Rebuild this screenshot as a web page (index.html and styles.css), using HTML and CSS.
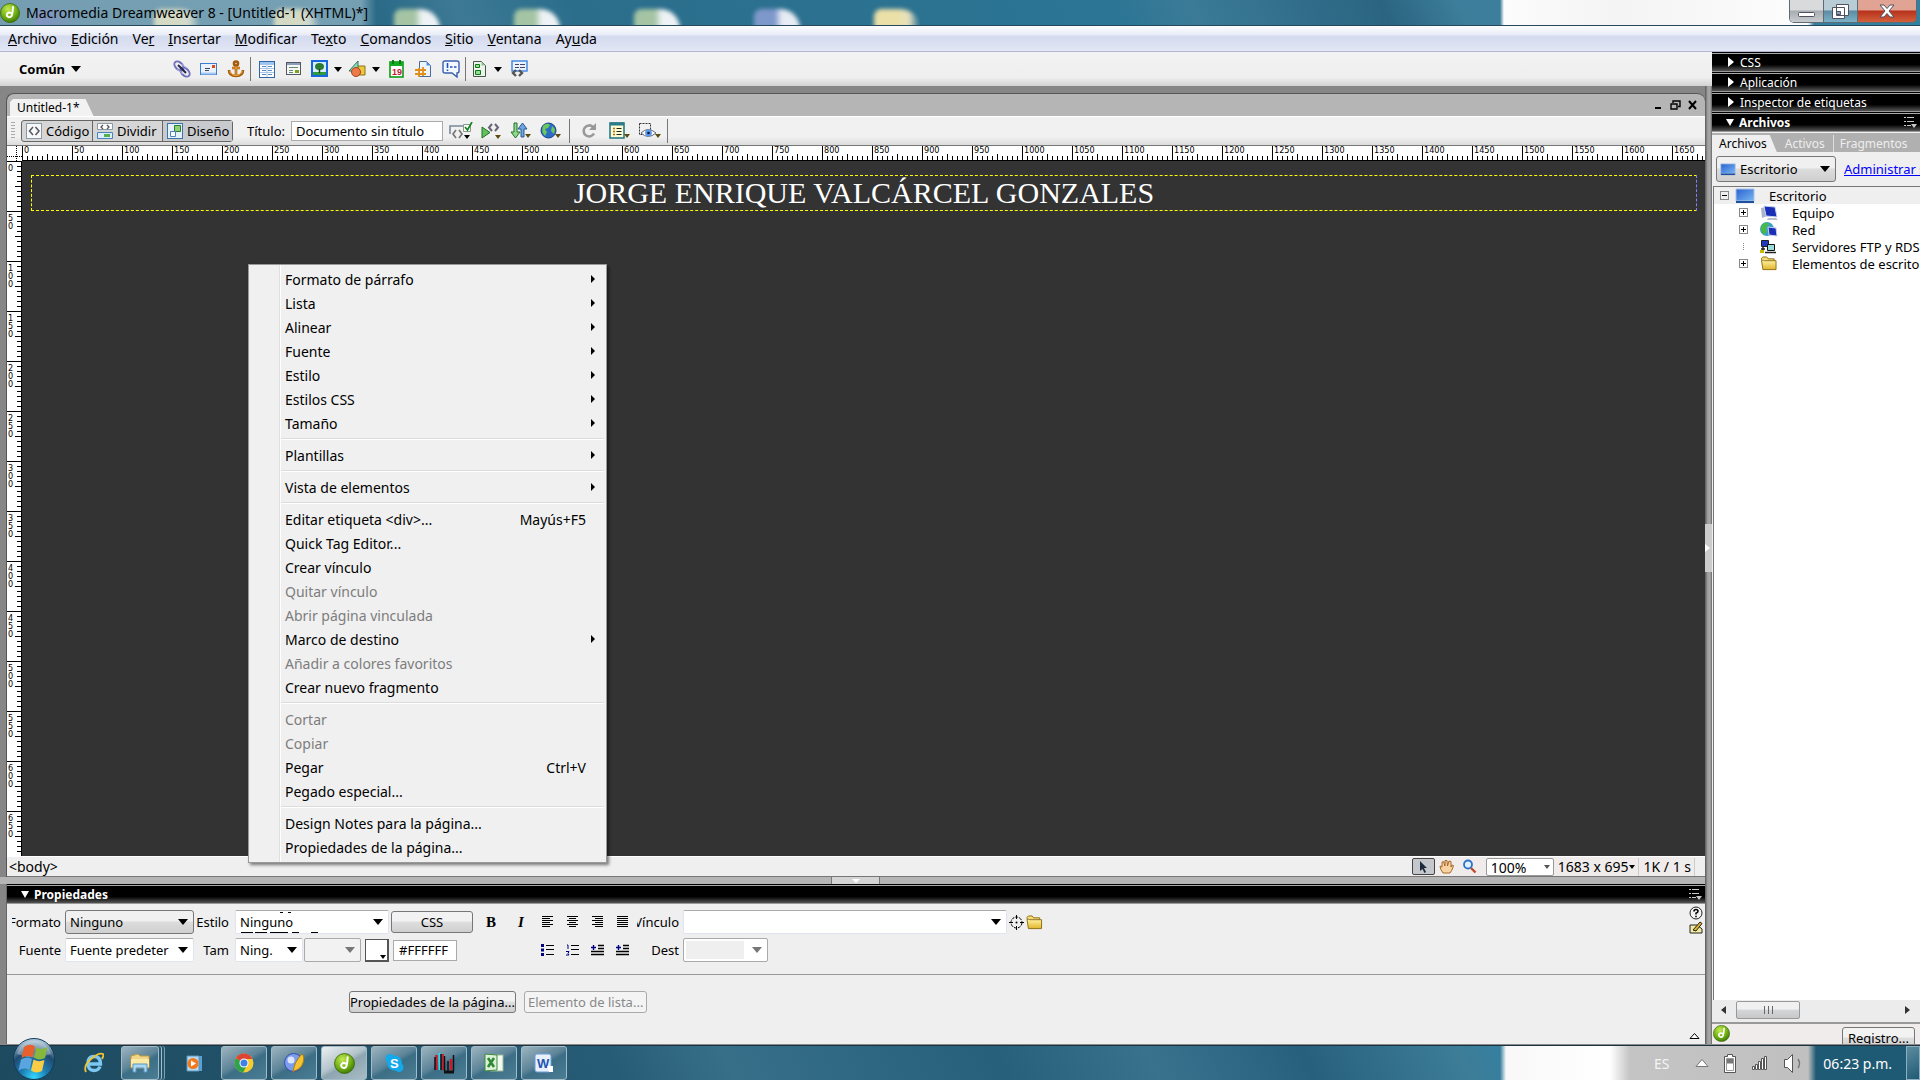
FILE: index.html
```html
<!DOCTYPE html>
<html lang="es">
<head>
  <meta charset="UTF-8">
  <meta name="viewport" content="width=device-width, initial-scale=1.0">
  <title>Macromedia Dreamweaver 8 - [Untitled-1 (XHTML)*]</title>
  <link rel="stylesheet" href="styles.css">
</head>
<body>
  <!-- Shared icon shapes -->
  <svg class="defs" width="0" height="0" aria-hidden="true">
    <defs>
      <radialGradient id="green" cx="40%" cy="30%" r="75%">
        <stop offset="0" stop-color="#c3ea4f"/><stop offset="0.6" stop-color="#6fae14"/><stop offset="1" stop-color="#3c7207"/>
      </radialGradient>
      <radialGradient id="orb" cx="50%" cy="95%" r="90%">
        <stop offset="0" stop-color="#35d8ff"/><stop offset="0.35" stop-color="#1d7fb4"/><stop offset="0.7" stop-color="#1f4a70"/><stop offset="1" stop-color="#a9c4d6"/>
      </radialGradient>
      <linearGradient id="blue" x1="0" y1="0" x2="1" y2="1">
        <stop offset="0" stop-color="#2a62d0"/><stop offset="1" stop-color="#7ab6f2"/>
      </linearGradient>
      <linearGradient id="gold" x1="0" y1="0" x2="0" y2="1">
        <stop offset="0" stop-color="#fff3a0"/><stop offset="1" stop-color="#e2b52c"/>
      </linearGradient>
      <symbol id="dw" viewBox="0 0 20 20">
        <circle cx="10" cy="10" r="9.5" fill="url(#green)" stroke="#386a08" stroke-width="0.8"/>
        <path d="M13 4C12.600 9 12.500 11.500 11.500 13.200a2.600 2.300 0 1 1-.6-3.200" fill="none" stroke="#fff" stroke-width="1.900" stroke-linecap="round"/>
      </symbol>
      <symbol id="folder" viewBox="0 0 18 16">
        <path d="M1 4V2.500L2.500 1h4L8 3h6.500v2" fill="#f6dc75" stroke="#8c6c10"/>
        <path d="M2.500 14.500L1 4.500h2L4 5h12.500v9.500z" fill="url(#gold)" stroke="#8c6c10"/>
      </symbol>
      <symbol id="monitor" viewBox="0 0 20 16">
        <path d="M1 1h18v12H1z" fill="url(#blue)" stroke="#a7c4e6"/>
        <path d="M1 13h18v2H1z" fill="#1c4f9c"/>
      </symbol>
      <symbol id="panelmenu" viewBox="0 0 14 12">
        <path d="M1 1.500h2M1 5.500h2M1 9.500h2M4 1.500h7M4 5.500h7M4 9.500h4" stroke="#c8c8c8"/>
        <path d="M8 8h6l-3 4z" fill="#c8c8c8"/>
      </symbol>
    </defs>
  </svg>

  <header class="titlebar">
    <div class="desktop-icons" aria-hidden="true">
      <i class="blob violet"></i><i class="blob sand"></i><i class="blob sand"></i>
      <i class="blob sheet"></i><i class="blob sheet"></i><i class="blob sheet"></i>
      <i class="blob doc"></i><i class="blob sand"></i>
    </div>
    <h1><svg width="20" height="20"><use href="#dw"/></svg><span>Macromedia Dreamweaver 8 - [Untitled-1 (XHTML)*]</span></h1>
    <div class="win-controls">
      <button class="min" aria-label="Minimizar"><svg width="18" height="6"><rect x="0.500" y="0.500" width="16" height="4" rx="1" fill="#fff" stroke="#50505e"/></svg></button>
      <button class="max" aria-label="Restaurar"><svg width="19" height="17"><path d="M5.500 1.500h12v11h-12z M1.500 4.500h12v11h-12z" fill="#fff" stroke="#50505e"/><path d="M5.500 8.500h4v3h-4z" fill="#8aa6b4" stroke="#50505e"/></svg></button>
      <button class="close" aria-label="Cerrar"><svg width="16" height="14"><path d="M1 1h4l3 3.500L11 1h4l-5 6 5 6h-4L8 9.500 5 13H1l5-6z" fill="#fff" stroke="#50505e"/></svg></button>
    </div>
  </header>

  <nav class="menubar">
    <button><u>A</u>rchivo</button>
    <button><u>E</u>dición</button>
    <button>Ve<u>r</u></button>
    <button><u>I</u>nsertar</button>
    <button><u>M</u>odificar</button>
    <button>Te<u>x</u>to</button>
    <button><u>C</u>omandos</button>
    <button><u>S</u>itio</button>
    <button><u>V</u>entana</button>
    <button>Ay<u>u</u>da</button>
  </nav>

  <div class="workspace">
    <div class="left">
      <div class="insertbar">
        <button class="category">Común <i class="caret"></i></button>
        <button aria-label="Hipervínculo"><svg width="18" height="18"><g fill="none" stroke="#7272bd" stroke-width="2"><ellipse cx="6" cy="6" rx="5.500" ry="3.500" transform="rotate(45 6 6)"/><ellipse cx="12" cy="12" rx="5.500" ry="3.500" transform="rotate(45 12 12)"/></g><path d="M5 5l8 8" stroke="#23234e" stroke-width="2"/><path d="M8 4l6 4M4 9l6 5" stroke="#b4b4e4"/></svg></button>
        <button aria-label="Correo"><svg width="17" height="14"><rect x="0.500" y="1.500" width="16" height="11" fill="#e8f1fc" stroke="#3b7dd0"/><path d="M1 11.500h15" stroke="#a8c8f0" stroke-width="2"/><path d="M5 6.500h5M5 8.500h4" stroke="#445"/><path d="M12 3h3v3h-3z" fill="#e04a18"/></svg></button>
        <button aria-label="Anclaje"><svg width="18" height="18"><g fill="none" stroke="#a35a0b" stroke-width="2.600"><circle cx="9" cy="3.500" r="2"/><path d="M9 5v11M5 8h8M2 10c0 4 3 6 7 6s7-2 7-6"/></g><g fill="none" stroke="#f2a83a"><path d="M9 6v10M5 8h8M2.500 11c1 3 3 4.500 6.500 4.500s5.500-1.500 6.500-4.500"/></g></svg></button>
        <i class="sep"></i>
        <button aria-label="Tabla"><svg width="16" height="17"><rect x="0.500" y="0.500" width="15" height="16" fill="#fff" stroke="#2f66a8"/><path d="M1 2h14" stroke="#9cc4f0" stroke-width="2"/><path d="M3 5.500h4M9 5.500h4M3 9.500h4M9 9.500h4M3 13.500h4M9 13.500h4" stroke="#5b8cc4"/><path d="M1 3.500h14M1 7.500h14M1 11.500h14M8 3v13" stroke="#a9c6e8"/></svg></button>
        <button aria-label="Div"><svg width="16" height="14"><rect x="0.500" y="0.500" width="14" height="12" fill="#f5f7f5" stroke="#556"/><path d="M1 2h13" stroke="#8aa0b8" stroke-width="2"/><path d="M3 5.500h9M3 8.500h4M3 10.500h4" stroke="#687"/><path d="M9 8h4v3H9z" fill="#7fa022"/></svg></button>
        <button class="wide" aria-label="Imagen"><svg width="17" height="18"><rect x="1" y="1" width="15" height="15" fill="#d8eeff" stroke="#1666e2" stroke-width="2"/><path d="M2 12h13v3H2z" fill="#2e9a3a"/><ellipse cx="8.500" cy="6.500" rx="4.500" ry="3.500" fill="#2a7c30"/><path d="M8.500 9v4" stroke="#241" stroke-width="1.500"/></svg><i class="caret small"></i></button>
        <button class="wide" aria-label="Media"><svg width="18" height="18"><path d="M8 6h9v9H8z" fill="#ecc83c" stroke="#8c7414"/><path d="M1 11L10 1v10z" fill="#8fdcb8" stroke="#277a5a"/><circle cx="8" cy="12" r="4.500" fill="#ee7a4a" stroke="#a8401c"/></svg><i class="caret small"></i></button>
        <button aria-label="Fecha"><svg width="16" height="18"><rect x="1" y="2" width="13" height="15" fill="#fff" stroke="#0c9a16" stroke-width="1.600"/><path d="M1 2h13v4H1z" fill="#12ac20"/><path d="M4 0v4M11 0v4" stroke="#0b7c14" stroke-width="2"/><text x="3" y="15" class="cal">19</text></svg></button>
        <button aria-label="Server-side include"><svg width="17" height="18"><path d="M4.500 1.500h7l4 4v11h-11z" fill="#eef4fc" stroke="#4c6a9c"/><path d="M11.500 1.500v4h4z" fill="#4a94e8"/><path d="M4 8v9M8 7v9M0 10h11M0 14h11" stroke="#e0901a" stroke-width="1.800"/></svg></button>
        <button aria-label="Comentario"><svg width="18" height="18"><path d="M3 1h12q2 0 2 2v8q0 2-2 2v4l-5-4H3q-2 0-2-2V3q0-2 2-2z" fill="#f4f8ff" stroke="#3a5fae" stroke-width="1.400"/><path d="M5.500 3v5M5.500 9.500v1.500" stroke="#1e50c0" stroke-width="1.600"/><path d="M8 7h2.500M12 7h2.500" stroke="#1e50c0" stroke-width="1.500"/></svg></button>
        <i class="sep"></i>
        <button class="wide" aria-label="Plantillas"><svg width="16" height="18"><path d="M1.500 1.500h8l4 4v11h-12z" fill="#eef2ee" stroke="#4a554a"/><path d="M9.500 1.500v4h4z" fill="#8cc48c"/><path d="M3.500 4.500h4v3h-4zM3.500 10.500h5v4h-5z" fill="#8fe08f" stroke="#0d7a14"/></svg><i class="caret small"></i></button>
        <button aria-label="Selector de etiquetas"><svg width="17" height="18"><rect x="1" y="1" width="15" height="10" fill="#eaf4ff" stroke="#3b84dc" stroke-width="1.400"/><path d="M4 4.500h4M9 4.500h5M4 7.500h4M9 7.500h5" stroke="#446"/><path d="M5 10l-3 3L5 16M8 10l3 3L8 16" fill="none" stroke="#555" stroke-width="2.400"/></svg></button>
      </div>

      <section class="document">
        <div class="tabstrip">
          <button class="tab">Untitled-1*</button>
          <div class="doc-controls">
            <button aria-label="Minimizar documento"><svg width="10" height="10"><path d="M2 8h6" stroke="#000" stroke-width="2"/></svg></button>
            <button aria-label="Restaurar documento"><svg width="11" height="10"><path d="M3 3V1h7v5.500H8" fill="none" stroke="#000" stroke-width="1.400"/><path d="M1 4h6v5H1z" fill="none" stroke="#000" stroke-width="1.400"/></svg></button>
            <button aria-label="Cerrar documento"><svg width="10" height="10"><path d="M1 1l7 8M8 1L1 9" stroke="#000" stroke-width="2"/></svg></button>
          </div>
        </div>

        <div class="doc-toolbar">
          <i class="grip"></i>
          <div class="views">
            <button><svg width="16" height="16"><rect x="0.500" y="0.500" width="15" height="15" fill="#f8f8f8" stroke="#8a9aa8"/><path d="M7 4L3.500 8 7 12M9.500 4L13 8l-3.500 4" fill="none" stroke="#556" stroke-width="1.500"/></svg>Código</button>
            <button><svg width="16" height="16"><path d="M0.500 0.500h15v6h-15z" fill="#fff" stroke="#8a9aa8"/><path d="M6 2L4 4l2 2M10 2l2 2-2 2" fill="none" stroke="#556" stroke-width="1.300"/><path d="M0.500 9.500h15v6h-15z" fill="#dcedff" stroke="#4a84b8"/><path d="M7 11h6v3H7z" fill="#54b048"/></svg>Dividir</button>
            <button class="on"><svg width="16" height="16"><rect x="0.500" y="0.500" width="15" height="15" fill="#e4f0fa" stroke="#3a74a8"/><path d="M7.500 2.500h6v6h-6z" fill="#8fd070" stroke="#2c7a3c"/><path d="M3.500 8.500h5v5h-5z" fill="#fff" stroke="#4a84b8"/></svg>Diseño</button>
          </div>
          <label for="doc-title">Título:</label>
          <input id="doc-title" type="text" value="Documento sin título">
          <div class="doc-tools">
            <button aria-label="Comprobar navegador"><svg width="24" height="18"><path d="M1 12V4h13" fill="none" stroke="#7a8898" stroke-width="1.600"/><path d="M7 8l-3 4 3 4M10 8l3 4-3 4" fill="none" stroke="#777" stroke-width="1.700"/><path d="M14.500 2.500h7v7h-7z" fill="#fff" stroke="#8a9a8a"/><path d="M16 5l2.500 3L23 0" fill="none" stroke="#17851f" stroke-width="1.700"/><path d="M15 13h6l-3 4z"/></svg></button>
            <button aria-label="Validar"><svg width="22" height="18"><path d="M2 5v11l8-5.500z" fill="#5fc25a" stroke="#236e2a"/><path d="M12 2L9 5.500 12 9M15 2l3 3.500L15 9" fill="none" stroke="#667" stroke-width="2"/><path d="M15 13h6l-3 4z" fill="#5a4c10"/></svg></button>
            <button aria-label="Administración de archivos"><svg width="22" height="18"><path d="M4 1h3v9h3l-4.500 6L1 10h3z" fill="#8fd98a" stroke="#23702c"/><path d="M11 15h3V7h3l-4.500-6L8 7h3z" fill="#6fa6e0" stroke="#265a94"/><path d="M15 12h6l-3 4z" fill="#5a4c10"/></svg></button>
            <button aria-label="Vista previa"><svg width="22" height="18"><circle cx="8.500" cy="8.500" r="7.500" fill="#2a6cc8" stroke="#1a4480"/><path d="M3 4q4-4 7-1l-2 3-3 1 2 3-2 4q-4-4-2-10zM12 4l3 3-1 5-3-3z" fill="#6cc858"/><path d="M15 12h6l-3 4z" fill="#5a4c10"/></svg></button>
            <i class="sep"></i>
            <button aria-label="Actualizar"><svg width="18" height="18"><path d="M14 11.500A5.500 5.500 0 1 1 13 5" fill="none" stroke="#999" stroke-width="2.600"/><path d="M16 1v7H9z" fill="#999"/></svg></button>
            <button aria-label="Opciones de vista"><svg width="21" height="18"><rect x="1" y="1" width="14" height="15" fill="#fffbd0" stroke="#2a7a88" stroke-width="1.600"/><path d="M1 2h14" stroke="#2a7a88" stroke-width="3"/><path d="M4 6.500h2M4 9.500h2M4 12.500h2" stroke="#b06a10" stroke-width="1.500"/><path d="M7.500 6.500h5M7.500 9.500h5M7.500 12.500h5" stroke="#222"/><path d="M15 12h6l-3 4z" fill="#5a4c10"/></svg></button>
            <button aria-label="Ayudas visuales"><svg width="23" height="18"><rect x="1.500" y="1.500" width="11" height="11" fill="none" stroke="#333" stroke-dasharray="2 1"/><path d="M3 11q7-7 15 0-8 7-15 0z" fill="#fff" stroke="#667"/><circle cx="10.500" cy="11" r="3.400" fill="#5a9ae8"/><circle cx="10.500" cy="11" r="1.300" fill="#114"/><path d="M17 12h6l-3 4z" fill="#5a4c10"/></svg></button>
            <i class="sep"></i>
          </div>
        </div>

        <div class="stage">
          <div class="corner"></div>
          <div class="ruler-h" id="ruler-h"></div>
          <div class="ruler-v" id="ruler-v"></div>
          <div class="canvas">
            <div class="layout-div">JORGE ENRIQUE VALCÁRCEL GONZALES</div>
          </div>
        </div>

        <div class="statusbar">
          <button class="tagsel">&lt;body&gt;</button>
          <div class="status-tools">
            <button class="on" aria-label="Seleccionar"><svg width="10" height="14"><path d="M2 1v10l2.500-2 2 4 1.500-1-2-4H9z" fill="#1c2c3c"/></svg></button>
            <button aria-label="Mano"><svg width="15" height="15"><path d="M4 14Q1 10 1 7l2 1V3l1.500-.5L6 7V1.500h2L8.500 7 10 2l2 .5V8l1-2 1.500.5Q13 12 11 14z" fill="#f6d3a0" stroke="#a8682a"/></svg></button>
            <button aria-label="Zoom"><svg width="15" height="15"><circle cx="6" cy="5.500" r="4" fill="#dcf0ff" stroke="#2a72c8" stroke-width="1.800"/><path d="M9 9l4.500 4.500" stroke="#c04a30" stroke-width="2.400"/></svg></button>
            <span class="select chevron"><select aria-label="Nivel de zoom"><option>100%</option></select></span>
            <button class="size">1683 x 695<i class="caret tiny"></i></button>
            <span class="weight">1K / 1 s</span>
          </div>
        </div>
      </section>

      <div class="splitter"><button aria-label="Contraer panel"><i class="caret white"></i></button></div>

      <section class="properties">
        <h2 class="panel-head open"><i class="arrow"></i>Propiedades<svg width="14" height="12"><use href="#panelmenu"/></svg></h2>
        <div class="props">
          <div class="col">
            <div class="prow">
              <label class="l1" for="formato">Formato</label>
              <span class="select grey w-format"><select id="formato"><option>Ninguno</option></select></span>
              <label class="l2" for="estilo">Estilo</label>
              <span class="select w-style"><select id="estilo"><option>Ninguno</option></select></span>
              <button class="push css">CSS</button>
            </div>
            <div class="prow">
              <label class="l1" for="fuente">Fuente</label>
              <span class="select w-format"><select id="fuente"><option>Fuente predeter</option></select></span>
              <label class="l2" for="tam">Tam</label>
              <span class="select w-size"><select id="tam"><option>Ning.</option></select></span>
              <span class="select off w-unit"><select aria-label="Unidad" disabled><option></option></select></span>
              <button class="swatch" aria-label="Color de texto"><i class="caret tiny"></i></button>
              <input class="hex" type="text" value="#FFFFFF" aria-label="Color hexadecimal">
            </div>
          </div>
          <div class="formats">
            <button class="b">B</button>
            <button class="i">I</button>
            <button aria-label="Alinear a la izquierda"><svg width="12" height="12"><path d="M0 0.500h11M0 2.500h8M0 4.500h11M0 6.500h8M0 8.500h11M0 10.500h8" stroke="#000"/></svg></button>
            <button aria-label="Centrar"><svg width="12" height="12"><path d="M0 0.500h11M2 2.500h7M0 4.500h11M2 6.500h7M0 8.500h11M2 10.500h7" stroke="#000"/></svg></button>
            <button aria-label="Alinear a la derecha"><svg width="12" height="12"><path d="M0 0.500h11M3 2.500h8M0 4.500h11M3 6.500h8M0 8.500h11M3 10.500h8" stroke="#000"/></svg></button>
            <button aria-label="Justificar"><svg width="12" height="12"><path d="M0 0.500h11M0 2.500h11M0 4.500h11M0 6.500h11M0 8.500h11M0 10.500h11" stroke="#000"/></svg></button>
            <button class="first" aria-label="Lista sin ordenar"><svg width="13" height="12"><path d="M0 1.500h3M0 6h3M0 10.500h3" stroke="#000080" stroke-width="3"/><path d="M5 1.500h8M5 5.500h8M5 10.500h8" stroke="#000"/></svg></button>
            <button aria-label="Lista ordenada"><svg width="13" height="12"><path d="M1 1h1v4M0 7.500h3l-1 2 1 1.500H0" fill="none" stroke="#000080"/><path d="M5 1.500h8M5 5.500h8M5 10.500h8" stroke="#000"/></svg></button>
            <button aria-label="Anular sangría"><svg width="13" height="12"><path d="M0 3.500h5M2.500 1v5" stroke="#000080" stroke-width="1.400"/><path d="M7 1.500h6M7 4.500h6M0 7.500h13M0 10.500h13" stroke="#000" stroke-width="1.500"/></svg></button>
            <button aria-label="Sangría"><svg width="13" height="12"><path d="M0 3.500h5M2.500 1v5" stroke="#000080" stroke-width="1.400"/><path d="M7 1.500h6M7 4.500h6M0 7.500h13M0 10.500h13" stroke="#000" stroke-width="1.500"/></svg></button>
          </div>
          <div class="col">
            <div class="prow">
              <label class="l3" for="vinculo">Vínculo</label>
              <span class="select w-link"><select id="vinculo"><option></option></select></span>
              <button class="bare" aria-label="Señalar archivo"><svg width="15" height="15"><circle cx="7.500" cy="7.500" r="5.500" fill="none" stroke="#000" stroke-dasharray="3 1"/><path d="M7.500 0v15M0 7.500h15" stroke="#000" stroke-dasharray="4 7"/><circle cx="7.500" cy="7.500" r="1"/></svg></button>
              <button class="bare" aria-label="Buscar archivo"><svg width="17" height="15"><use href="#folder"/></svg></button>
            </div>
            <div class="prow">
              <label class="l3" for="dest">Dest</label>
              <span class="select off inset w-dest"><select id="dest" disabled><option></option></select></span>
            </div>
          </div>
          <div class="help">
            <button aria-label="Ayuda"><svg width="14" height="14"><circle cx="7" cy="7" r="6" fill="#f4f4f4" stroke="#222"/><path d="M5 5.500q0-2 2-2t2 1.800Q9 6.500 7 7.300V8.500M7 9.700v1.500" fill="none" stroke="#000" stroke-width="1.600"/></svg></button>
            <button aria-label="Edición rápida"><svg width="14" height="14"><path d="M1 4h7l5 4v4H1z" fill="#f2eca0" stroke="#222"/><path d="M4 9l7-8 2 1.500-6 7.500z" fill="#e0b030" stroke="#222"/></svg></button>
          </div>
        </div>
        <div class="props-lower">
          <button class="push">Propiedades de la página...</button>
          <button class="push" disabled>Elemento de lista...</button>
          <svg class="expander" width="12" height="8"><path d="M1 6.500h9L5.500 1.500z" fill="#fff" stroke="#000"/></svg>
        </div>
      </section>
    </div>

    <div class="side-split"><button aria-label="Contraer paneles"><svg width="5" height="8"><path d="M0 0l5 4-5 4z" fill="#fff"/></svg></button></div>

    <aside class="panels">
      <h2 class="panel-head"><i class="arrow"></i>CSS</h2>
      <h2 class="panel-head"><i class="arrow"></i>Aplicación</h2>
      <h2 class="panel-head"><i class="arrow"></i>Inspector de etiquetas</h2>
      <h2 class="panel-head open"><i class="arrow"></i>Archivos<svg width="14" height="12"><use href="#panelmenu"/></svg></h2>
      <div class="panel-tabs">
        <button class="on">Archivos</button>
        <button>Activos</button>
        <button>Fragmentos</button>
      </div>
      <div class="site-row">
        <span class="select grey site"><svg width="16" height="13"><use href="#monitor"/></svg><select aria-label="Sitio"><option>Escritorio</option></select></span>
        <a href="#">Administrar sitios</a>
      </div>
      <ul class="tree">
        <li class="root"><i class="box minus"></i><svg width="20" height="16"><use href="#monitor"/></svg>Escritorio</li>
        <li><i class="box"></i><svg width="20" height="16"><path d="M2 3l5-1 1 9-5 2z" fill="#a8b4c8"/><path d="M5 1l11 1 2 10-11-1z" fill="#1a2fb8" stroke="#c8d4ec"/><path d="M9 13h8l2 2H8z" fill="#b8c0cc"/></svg>Equipo</li>
        <li><i class="box"></i><svg width="20" height="16"><circle cx="8" cy="7" r="7" fill="#3aa0c8"/><path d="M3 3q4-4 7-1l-3 4 1 3-3 4Q0 8 3 3z" fill="#4cb848"/><path d="M9 5l8 1 1 8-8-1z" fill="#1a2fb8" stroke="#c8d4ec"/></svg>Red</li>
        <li><i class="box none"></i><svg width="20" height="16"><path d="M2.500 1.500h7v6h-7z" fill="#2038c0" stroke="#222"/><path d="M8.500 5.500h7v6h-7z" fill="#9adcd8" stroke="#111"/><path d="M6 13.500h11M2 10h4M4 8v5" stroke="#222" stroke-width="1.500"/><path d="M1 11h4v3H1z" fill="#c8b800"/></svg>Servidores FTP y RDS</li>
        <li><i class="box"></i><svg width="17" height="15"><use href="#folder"/></svg>Elementos de escritorio</li>
      </ul>
      <div class="hscroll">
        <button aria-label="Izquierda"><svg width="5" height="8"><path d="M5 0v8L0 4z" fill="#333"/></svg></button>
        <i class="thumb"></i>
        <button aria-label="Derecha"><svg width="5" height="8"><path d="M0 0v8l5-4z" fill="#333"/></svg></button>
      </div>
      <div class="panel-foot">
        <svg width="17" height="17"><use href="#dw"/></svg>
        <button class="push">Registro...</button>
      </div>
    </aside>
  </div>

  <footer class="taskbar">
    <button class="start" aria-label="Inicio"><svg width="44" height="44" viewBox="0 0 44 44"><circle cx="22" cy="22" r="20.500" fill="url(#orb)" stroke="#123b57"/><path d="M5 17a17.500 17.500 0 0 1 34 0Q22 24 5 17z" fill="#fff" opacity="0.300"/><path d="M12 10q6-4 11-.5l-2.500 11q-5-3-11 .5z" fill="#e8602c"/><path d="M24.500 10.500q5 3 11-.5l-2.500 11q-6 3-11-.5z" fill="#86b83c"/><path d="M9 22.500q6-3.500 11-.5l-2.500 11q-5-3-11 .5z" fill="#5aa4e0"/><path d="M21.500 22.500q5 3 11 .5L30 34q-6 3-11-.5z" fill="#f8cc44"/></svg></button>
    <button class="task flat ie" aria-label="Internet Explorer"><svg width="20" height="22"><path d="M16 14.500q-1.500 4-6 4-6 0-6-7t6-7q6.500 0 6.500 7.500H5" fill="none" stroke="#7cc8f2" stroke-width="3.400"/><path d="M2 20Q-1 14 7 7t12-5q1 1-1 5" fill="none" stroke="#f2c430" stroke-width="1.800"/></svg></button>
    <button class="task stacked" aria-label="Explorador"><svg width="22" height="20"><path d="M2 3l7-2 2 2h9v12H2z" fill="#f0d788" stroke="#c09a3c"/><path d="M2 6h18v8H2z" fill="#fbeaa6"/><path d="M4 11h14v8h-3v-4H7v4H4z" fill="#a9d8f4" stroke="#5a94bc"/></svg></button>
    <button class="task flat" aria-label="Reproductor"><svg width="17" height="17"><path d="M8 1h8v15H8z" fill="#5aa0d4"/><path d="M1 1h12v15H1z" fill="#b8daf0" stroke="#5a94bc"/><circle cx="7" cy="8.500" r="5.500" fill="#f07a1c"/><path d="M5 5.500l5 3-5 3z" fill="#fff"/></svg></button>
    <button class="task" aria-label="Chrome"><svg width="20" height="20"><circle cx="10" cy="10" r="9.500" fill="#f6cc30"/><path d="M10 10L1.800 5.200A9.500 9.500 0 0 1 18.500 6H10z" fill="#de4434"/><path d="M10 10L1.800 5.200A9.500 9.500 0 0 0 9 19.500l4-7z" fill="#2fa24c"/><circle cx="10" cy="10" r="4.500" fill="#fff"/><circle cx="10" cy="10" r="3.500" fill="#3f7fe8"/></svg></button>
    <button class="task" aria-label="Editor"><svg width="21" height="20"><circle cx="9.500" cy="9.500" r="9" fill="#7c9cf0" stroke="#3450a8"/><circle cx="7" cy="7" r="3.500" fill="#dce6ff"/><path d="M9 19Q10 9 18 1q3 3 1 9t-9 8z" fill="#f4c430" stroke="#a87c10"/></svg></button>
    <button class="task active" aria-label="Dreamweaver"><svg width="21" height="21"><use href="#dw"/></svg></button>
    <button class="task" aria-label="Skype"><svg width="19" height="20"><circle cx="9.500" cy="10" r="7.500" fill="#14a9ea"/><circle cx="5" cy="5.500" r="4.500" fill="#14a9ea"/><circle cx="14" cy="14.500" r="4.500" fill="#14a9ea"/><text x="5" y="15" class="letter">S</text></svg></button>
    <button class="task" aria-label="Biblioteca"><svg width="21" height="22"><path d="M2.500 3v15M8.500 2v16M17 7v11" stroke="#c81c2c" stroke-width="2.500"/><path d="M5.500 1v17" stroke="#22dcf0" stroke-width="2"/><path d="M1 5v13M7 2v16M10.500 4v15M14 9v10M19.500 3v16" stroke="#111" stroke-width="1.500"/><path d="M10 20h10" stroke="#111" stroke-width="3"/></svg></button>
    <button class="task" aria-label="Excel"><svg width="20" height="20"><path d="M6 2h13v16H6z" fill="#f2faf0" stroke="#9ab89a"/><path d="M1 1l12 1v15L1 18z" fill="#dcf0d8" stroke="#3a8a3c"/><path d="M4 5l6 9M10 5l-6 9" stroke="#2f8a34" stroke-width="2.600"/></svg></button>
    <button class="task" aria-label="Word"><svg width="20" height="21"><rect x="1" y="1" width="16" height="18" rx="2" fill="#e8f0fb" stroke="#6a9cd8"/><text x="3" y="15" class="letter word">W</text><path d="M13 13h6v6h-4z" fill="#fff"/></svg></button>

    <div class="tray">
      <span class="lang">ES</span>
      <svg width="14" height="10"><path d="M1 8.500h12L7 1.500z" fill="#fff" stroke="#777"/></svg>
      <svg width="14" height="21"><path d="M4.500 1.500h5v2h3v16h-11v-16h3z" fill="#fff" stroke="#555"/><path d="M4 5.500h6v5H4z" fill="#777"/><path d="M3.500 5.500h7v12h-7z" fill="none" stroke="#999"/></svg>
      <svg width="18" height="16"><path d="M1.500 11.500h2v3h-2zM4.500 9.500h2v5h-2zM7.500 6.500h2v8h-2zM10.500 3.500h2v11h-2zM13.500 1.500h2v13h-2z" fill="#fff" stroke="#555"/></svg>
      <svg width="20" height="21"><path d="M1.500 6.500h3l5-5v18l-5-5h-3z" fill="#fff" stroke="#555"/><path d="M15 6q3 4.500 0 9" fill="none" stroke="#777" stroke-width="1.500"/></svg>
      <time>06:23 p.m.</time>
      <button class="peek" aria-label="Mostrar escritorio"></button>
    </div>
  </footer>

  <!-- Context menu -->
  <ul class="context-menu">
    <li><button class="sub">Formato de párrafo</button></li>
    <li><button class="sub">Lista</button></li>
    <li><button class="sub">Alinear</button></li>
    <li><button class="sub">Fuente</button></li>
    <li><button class="sub">Estilo</button></li>
    <li><button class="sub">Estilos CSS</button></li>
    <li><button class="sub">Tamaño</button></li>
    <li class="line"><button class="sub">Plantillas</button></li>
    <li class="line"><button class="sub">Vista de elementos</button></li>
    <li class="line"><button>Editar etiqueta &lt;div&gt;...<kbd>Mayús+F5</kbd></button></li>
    <li><button>Quick Tag Editor...</button></li>
    <li><button>Crear vínculo</button></li>
    <li><button disabled>Quitar vínculo</button></li>
    <li><button disabled>Abrir página vinculada</button></li>
    <li><button class="sub">Marco de destino</button></li>
    <li><button disabled>Añadir a colores favoritos</button></li>
    <li><button>Crear nuevo fragmento</button></li>
    <li class="line"><button disabled>Cortar</button></li>
    <li><button disabled>Copiar</button></li>
    <li><button>Pegar<kbd>Ctrl+V</kbd></button></li>
    <li><button>Pegado especial...</button></li>
    <li class="line"><button>Design Notes para la página...</button></li>
    <li><button>Propiedades de la página...</button></li>
  </ul>

  <script>
    // Fill both rulers with a label every 50 pixels
    function fillRuler(id, last) {
      const ruler = document.getElementById(id);
      for (let n = 0; n <= last; n += 50) {
        const mark = document.createElement("span");
        mark.textContent = n;
        ruler.appendChild(mark);
      }
    }

    fillRuler("ruler-h", 1650);
    fillRuler("ruler-v", 650);
  </script>
</body>
</html>
```
FILE: styles.css
```css
* {
  margin: 0;
  padding: 0;
  box-sizing: border-box;
}

body {
  height: 100vh;
  display: flex;
  flex-direction: column;
  overflow: hidden;
  background: #868686;
  color: #000;
  font-family: "Noto Sans", "Open Sans", sans-serif;
  font-size: 13px;
}

button, input, select {
  font: inherit;
  color: inherit;
  border: none;
  background: none;
  border-radius: 0;
  white-space: nowrap;
}

svg {
  flex: none;
}

.defs {
  position: absolute;
}

.caret {
  border: 5px solid transparent;
  border-top: 6px solid #000;
  border-bottom: none;
}

.caret.small {
  border-width: 5px 4px 0;
}

.caret.tiny {
  border-width: 4px 3px 0;
}

.caret.white {
  border-width: 4px 4px 0;
  border-top-color: #fff;
}

.sep {
  width: 1px;
  height: 24px;
  margin: 0 2px 0 1px;
  background: #777;
}

/* Title bar */
.titlebar {
  flex: none;
  height: 26px;
  position: relative;
  display: flex;
  justify-content: space-between;
  border-bottom: 1px solid #24485c;
  background:
    linear-gradient(90deg, transparent calc(100% - 420px), #fcfcfc calc(100% - 416px), #f4f4f4 calc(100% - 300px), #fdfdfd calc(100% - 112px), transparent calc(100% - 106px)),
    linear-gradient(65deg, #2b6784 0%, #2b6b88 20%, #3d7994 24%, #2b6e8c 30%, #2c7594 58%, #3b7b98 62%, #2a6481 72%, #3d7e9b 76%, #2f81a4 100%);
}

.titlebar h1 {
  z-index: 1;
  display: flex;
  align-items: center;
  gap: 6px;
  padding-right: 8px;
  font-size: 14px;
  font-weight: 400;
  background: linear-gradient(90deg, rgba(190, 212, 222, 0.5) 96%, transparent);
}

.desktop-icons {
  position: absolute;
  inset: 0 auto 0 34px;
  display: flex;
  align-items: flex-end;
  gap: 74px;
  overflow: hidden;
}

.blob {
  width: 46px;
  height: 20px;
  margin-bottom: -4px;
  border-radius: 8px 22px 0 0;
  filter: blur(2px);
}

.violet { background: linear-gradient(90deg, #4a55a8, transparent); }
.sand { background: linear-gradient(90deg, #ebe0a8 50%, #e8e2c0 75%, transparent); }
.sheet { background: linear-gradient(90deg, #a4c4a4 45%, #eef2f4 60%); }
.doc { background: linear-gradient(90deg, #7f98cc 45%, #e8ecf4 60%); }

.win-controls {
  display: flex;
  height: 23px;
  margin-right: 3px;
  border: 1px solid #5d6b74;
  border-top: none;
  border-radius: 0 0 5px 5px;
  overflow: hidden;
}

.win-controls button {
  display: flex;
  align-items: center;
  justify-content: center;
  width: 34px;
  border-right: 1px solid #5d6b74;
  background: linear-gradient(#d8dadc 45%, #a8adb2 50%, #c8ccd0);
}

.win-controls .min {
  padding-top: 8px;
}

.win-controls .max {
  background: linear-gradient(#b8ccd6 45%, #5d8ca4 50%, #7ab0c6);
}

.win-controls .close {
  width: 58px;
  border: none;
  background: linear-gradient(#e0a394 45%, #b8321c 50%, #d2603c);
}

/* Menu bar */
.menubar {
  flex: none;
  height: 26px;
  display: flex;
  gap: 14px;
  padding: 0 8px;
  font-size: 14px;
  border-bottom: 1px solid #b4b8d4;
  background: linear-gradient(#fdfdff 0, #e8ecf7 36%, #d4dbee 40%, #e2e6f5);
}

/* Workspace */
.workspace {
  flex: 1;
  min-height: 0;
  display: flex;
  border-bottom: 1px solid #8a8a8a;
}

.left {
  flex: 1;
  min-width: 0;
  display: flex;
  flex-direction: column;
}

.insertbar {
  flex: none;
  height: 34px;
  position: relative;
  z-index: 1;
  margin-right: -7px;
  display: flex;
  align-items: center;
  background: linear-gradient(#f2f2f2, #efefef 75%, #d2d2d2);
}

.insertbar button {
  width: 27px;
  display: flex;
  align-items: center;
  justify-content: center;
  gap: 6px;
}

.insertbar .wide {
  width: 38px;
}

.insertbar .category {
  width: 168px;
  padding-left: 19px;
  justify-content: flex-start;
  font-weight: 700;
}

.cal {
  font: 700 9px "Liberation Sans", sans-serif;
  fill: #c01830;
}

.document {
  flex: 1;
  min-height: 0;
  display: flex;
  flex-direction: column;
  margin: 7px 0 0 6px;
  border-left: 1px solid #555;
  border-top: 1px solid #555;
  border-radius: 8px 8px 0 0;
  background: #b5b5b5;
}

.tabstrip {
  flex: none;
  height: 22px;
  display: flex;
  justify-content: space-between;
  align-items: flex-end;
  padding: 0 7px 0 3px;
}

.tab {
  height: 17px;
  padding: 0 14px 0 7px;
  font-size: 12px;
  line-height: 18px;
  background: #f2f2f2;
  clip-path: polygon(0 3px, 3px 0, calc(100% - 8px) 0, 100% 100%, 0 100%);
}

.doc-controls {
  display: flex;
  gap: 7px;
  padding-bottom: 6px;
}

.doc-controls button {
  display: flex;
}

.doc-toolbar {
  flex: none;
  height: 30px;
  display: flex;
  align-items: center;
  padding-left: 4px;
  border-top: 1px solid #fff;
  border-bottom: 1px solid #777;
  background: linear-gradient(#f1f1f1 70%, #dcdcdc);
}

.grip {
  width: 4px;
  height: 18px;
  margin-right: 6px;
  background: repeating-linear-gradient(#aaa 0 1px, transparent 1px 3px);
}

.views {
  display: flex;
  height: 22px;
  border: 1px solid #666;
  border-radius: 3px;
  background: #d6d6d6;
}

.views button {
  display: flex;
  align-items: center;
  gap: 4px;
  width: 70px;
  padding-left: 4px;
}

.views button + button {
  border-left: 1px solid #666;
}

.views .on {
  background: #c8cacd;
}

.doc-toolbar label {
  width: 44px;
  margin-left: 14px;
}

.doc-toolbar input {
  width: 152px;
  height: 20px;
  padding: 0 4px;
  border: 1px solid #aaa;
  background: #fff;
}

.doc-tools {
  display: flex;
  align-items: center;
  padding-left: 3px;
}

.doc-tools button {
  display: flex;
  justify-content: center;
  width: 30px;
}

.doc-tools .sep {
  margin: 0 4px 0 3px;
}

/* Rulers and design canvas */
.stage {
  flex: 1;
  min-height: 0;
  display: grid;
  grid-template: 15px minmax(0, 1fr) / 15px minmax(0, 1fr);
  overflow: hidden;
  background: #fff;
}

.corner {
  background:
    repeating-linear-gradient(90deg, #000 0 1px, transparent 1px 2px) 0 10px / 100% 1px no-repeat,
    repeating-linear-gradient(#000 0 1px, transparent 1px 2px) 9px 0 / 1px 100% no-repeat;
}

.ruler-h,
.ruler-v {
  display: flex;
  overflow: hidden;
  font: 9px/9px "DejaVu Sans Condensed", "DejaVu Sans", sans-serif;
}

.ruler-h {
  border-bottom: 1px solid #000;
  background:
    repeating-linear-gradient(90deg, #000 0 1px, transparent 1px 50px),
    repeating-linear-gradient(90deg, #000 0 1px, transparent 1px 25px) 0 100% / 100% 6px no-repeat,
    repeating-linear-gradient(90deg, #000 0 1px, transparent 1px 5px) 0 100% / 100% 4px no-repeat;
}

.ruler-h span {
  flex: 0 0 50px;
  padding-left: 2px;
}

.ruler-v {
  flex-direction: column;
  border-right: 1px solid #000;
  background:
    repeating-linear-gradient(#000 0 1px, transparent 1px 50px),
    repeating-linear-gradient(#000 0 1px, transparent 1px 25px) 100% 0 / 6px 100% no-repeat,
    repeating-linear-gradient(#000 0 1px, transparent 1px 5px) 100% 0 / 4px 100% no-repeat;
}

.ruler-v span {
  flex: 0 0 50px;
  width: 7px;
  padding: 3px 0 0 1px;
  line-height: 8px;
  word-break: break-all;
}

.canvas {
  padding: 14px 8px 0 9px;
  background: #333;
}

.layout-div {
  height: 36px;
  border: 1px dashed #ff0;
  border-right-color: #8080ff;
  color: #fff;
  font: 30px/34px "Liberation Serif", serif;
  text-align: center;
}

.statusbar {
  flex: none;
  height: 21px;
  display: flex;
  justify-content: space-between;
  align-items: center;
  padding: 0 10px 0 2px;
  border-top: 1px solid #fff;
  border-bottom: 1px solid #777;
  font-size: 14px;
  line-height: 18px;
  background: #efefef;
}

.status-tools {
  display: flex;
  align-items: center;
  height: 100%;
  background: #f0eceb;
}

.status-tools button {
  display: flex;
  align-items: center;
  justify-content: center;
  width: 23px;
  height: 17px;
}

.status-tools .on {
  border: 1px solid #444;
  border-radius: 2px;
  background: #c4c8cc;
}

.status-tools .select {
  width: 68px;
  height: 18px;
  margin-left: 5px;
}

.status-tools .size {
  width: auto;
  gap: 1px;
  padding: 0 3px 0 4px;
}

.weight {
  padding: 0 3px 0 4px;
  border-left: 1px solid #ccc;
  border-right: 1px solid #ccc;
}

/* Drop-downs and push buttons */
.select {
  position: relative;
  flex: none;
  display: flex;
  align-items: center;
  height: 24px;
  border: 1px solid #e0e4ee;
  border-top-color: #aaa;
  border-radius: 2px;
  background: #fff;
}

.select::after {
  content: "";
  position: absolute;
  right: 5px;
  border: 5px solid transparent;
  border-top: 6px solid #000;
  border-bottom: none;
  pointer-events: none;
}

.select select {
  appearance: none;
  width: 100%;
  height: 100%;
  padding: 0 14px 0 4px;
  opacity: 1;
}

.select.grey {
  border-color: #777;
  border-radius: 3px;
  background: linear-gradient(#f0f0f0 45%, #dcdcdc 50%, #cfcfcf);
}

.select.off {
  border-color: #aaa;
  background: #f2f2f2;
}

.select.off::after {
  border-top-color: #777;
}

.select.off.inset {
  background: linear-gradient(90deg, #efefef 60px, #fff 60px);
  box-shadow: inset 0 0 0 2px #fff;
}

.select.chevron {
  border-color: #999;
}

.select.chevron::after {
  right: 3px;
  border-width: 4px 3px 0;
  border-top-color: #555;
}

.push {
  height: 22px;
  border: 1px solid #777;
  border-radius: 3px;
  line-height: 18px;
  background: linear-gradient(#f2f2f2 45%, #dedede 50%, #cfcfcf);
}

.push:disabled {
  color: #888;
  border-color: #aaa;
  background: #f4f4f4;
}

/* Properties inspector */
.splitter {
  flex: none;
  height: 7px;
  display: flex;
  justify-content: center;
  padding-left: 6px;
  background: #b5b5b5;
}

.splitter button {
  width: 49px;
  display: flex;
  justify-content: center;
  padding-top: 2px;
  border: 1px solid #777;
  border-width: 0 1px;
  background: #d4d4d4;
}

.panel-head {
  flex: none;
  display: flex;
  align-items: center;
  gap: 6px;
  height: 20px;
  padding: 0 3px 0 16px;
  border-top: 1px solid #000;
  border-bottom: 1px solid #999;
  box-shadow: inset 0 1px #aaa;
  color: #fff;
  font-size: 12px;
  font-weight: 400;
  background: linear-gradient(#000 65%, #555);
}

.panel-head svg {
  margin-left: auto;
}

.panel-head.open {
  gap: 5px;
  padding-left: 14px;
  font-weight: 700;
}

.arrow {
  border: 5px solid transparent;
  border-left: 6px solid #fff;
  border-right: none;
}

.open .arrow {
  border: 4px solid transparent;
  border-top: 7px solid #fff;
  border-bottom: none;
}

.properties {
  flex: none;
  margin-left: 6px;
  border-left: 1px solid #666;
  background: #efefef;
}

.props {
  display: flex;
  height: 71px;
  padding: 6px 2px 0 5px;
  border-bottom: 1px solid #999;
}

.col {
  display: flex;
  flex-direction: column;
  gap: 4px;
}

.prow {
  display: flex;
  align-items: center;
  height: 24px;
}

.prow label {
  display: flex;
  justify-content: flex-end;
  overflow: hidden;
  white-space: nowrap;
}

.l1 {
  width: 53px;
  padding-right: 4px;
}

.l2 {
  width: 41px;
  padding-right: 6px;
}

.l3 {
  width: 46px;
  padding-right: 4px;
}

.w-format { width: 129px; }
.w-style { width: 154px; }
.w-size { width: 68px; }
.w-unit { width: 57px; margin-left: 1px; }
.w-link { width: 324px; }
.w-dest { width: 85px; }

/* leftovers of the preview lines above and below the style name */
.w-style select {
  background:
    linear-gradient(90deg, #000 3px, transparent 3px 8px, #000 8px 11px, transparent 11px) 44px 1px / 20px 1px no-repeat,
    linear-gradient(90deg, #000 12px, transparent 12px 14px, #000 14px 26px, transparent 26px 29px, #000 29px 47px, transparent 47px 51px, #000 51px 58px, transparent 58px 70px, #000 70px 77px) 5px 21px / 77px 1px no-repeat;
}

.css {
  width: 82px;
  margin-left: 2px;
}

.swatch {
  display: flex;
  align-items: flex-end;
  justify-content: flex-end;
  width: 24px;
  height: 23px;
  margin: 0 4px;
  padding: 0 1px 1px 0;
  border: 1px solid #555;
  border-width: 1px 2px 2px 1px;
  background: #fff;
}

.hex {
  width: 64px;
  height: 21px;
  padding-left: 5px;
  border: 1px solid #aaa;
  background: #fff;
}

.formats {
  display: grid;
  grid-template-columns: 32px 28px repeat(4, 25px);
  grid-template-rows: 24px 24px;
  row-gap: 4px;
  padding-left: 2px;
}

.formats button {
  display: flex;
  align-items: center;
  justify-content: center;
}

.formats .first {
  grid-column: 3;
}

.formats .b {
  font: 700 15px "Liberation Serif", serif;
}

.formats .i {
  font: italic 700 15px "Liberation Serif", serif;
}

.bare {
  display: flex;
  padding-left: 2px;
}

.formats + .col {
  padding-left: 2px;
}

.help {
  margin: -4px 0 0 auto;
  display: flex;
  flex-direction: column;
}

.help button {
  display: flex;
  height: 15px;
}

.props-lower {
  display: flex;
  align-items: flex-start;
  gap: 8px;
  height: 69px;
  padding: 16px 4px 4px 342px;
}

.props-lower .push:disabled {
  padding: 0 3px;
}

.expander {
  margin: auto 0 0 auto;
}

/* Right-hand panels */
.side-split {
  flex: none;
  width: 7px;
  display: flex;
  align-items: center;
  background: linear-gradient(90deg, #666 1px, #999 2px, #aaa 5px, #666 7px);
}

.side-split button {
  display: flex;
  align-items: center;
  width: 7px;
  height: 48px;
  background: #ccc;
}

.panels {
  flex: none;
  width: 208px;
  display: flex;
  flex-direction: column;
  overflow: hidden;
  background: #efefef;
}

.panel-tabs {
  flex: none;
  height: 19px;
  display: flex;
  align-items: flex-end;
  margin-top: 1px;
  background: #b0b0b0;
}

.panel-tabs button {
  padding: 0 8px;
  height: 17px;
  line-height: 17px;
  font-size: 12px;
  color: #eee;
}

.panel-tabs button + button + button {
  padding: 0 6px;
  border-left: 1px solid #ddd;
}

.panel-tabs .on {
  padding: 0 10px 0 7px;
  color: #000;
  background: #efefef;
  clip-path: polygon(0 0, calc(100% - 7px) 0, 100% 100%, 0 100%);
}

.site-row {
  flex: none;
  display: flex;
  align-items: center;
  gap: 8px;
  height: 34px;
  padding-left: 4px;
  white-space: nowrap;
}

.site {
  width: 120px;
  height: 26px;
  padding-left: 3px;
}

.site-row a {
  color: #00f;
}

.tree {
  flex: 1;
  margin-left: 1px;
  border: 1px solid #777;
  border-width: 1px 0 0 1px;
  list-style: none;
  background: #fff;
}

.tree li {
  display: flex;
  align-items: center;
  height: 17px;
  padding-left: 25px;
  white-space: nowrap;
}

.tree svg {
  width: 20px;
  margin: 0 13px 0 11px;
}

.tree .root {
  padding-left: 6px;
  background: #efefef;
}

.root svg {
  margin: 0 14px 0 6px;
}

.box {
  flex: none;
  width: 9px;
  height: 9px;
  border: 1px solid #888;
  background:
    linear-gradient(#000, #000) 1px 3px / 5px 1px no-repeat,
    linear-gradient(#000, #000) 3px 1px / 1px 5px no-repeat;
}

.box.minus {
  background: linear-gradient(#000, #000) 1px 3px / 5px 1px no-repeat;
}

.box.none {
  border-color: transparent;
  background: repeating-linear-gradient(#888 0 1px, transparent 1px 2px) 3px 0 / 1px 100% no-repeat;
}

.hscroll {
  flex: none;
  height: 22px;
  display: flex;
  align-items: center;
  padding: 0 10px 3px 9px;
  background: #ececec;
}

.hscroll button {
  display: flex;
}

.hscroll button:last-child {
  margin-left: auto;
}

.thumb {
  width: 64px;
  height: 18px;
  margin-left: 10px;
  border: 1px solid #999;
  border-radius: 2px;
  background:
    repeating-linear-gradient(90deg, #666 0 1px, transparent 1px 4px) 27px 4px / 10px 8px no-repeat,
    linear-gradient(#f0f0f0 45%, #d4d6d8 50%, #c6c8ca);
}

.panel-foot {
  flex: none;
  display: flex;
  justify-content: space-between;
  height: 22px;
  padding: 1px 5px 0 1px;
  border-top: 2px solid #999;
  background: #f0ecec;
  overflow: hidden;
}

.panel-foot .push {
  margin-top: 2px;
  padding: 0 5px;
}

/* Task bar */
.taskbar {
  flex: none;
  height: 35px;
  position: relative;
  display: flex;
  gap: 4px;
  padding-left: 12px;
  border-top: 1px solid #1b3340;
  background:
    linear-gradient(90deg, transparent calc(100% - 420px), #f8f8f8 calc(100% - 414px), #fff calc(100% - 310px), #c4c4c4 calc(100% - 290px), #c0c0c0 calc(100% - 112px), #1f5a74 calc(100% - 104px)),
    linear-gradient(65deg, #1d4a5f 0, #275c76 32%, #376f89 38%, #27607b 52%, #38728d 60%, #27607d 68%, #3d7d98 76%, #2f81a4 80%);
}

.start {
  width: 42px;
  margin-top: -9px;
  margin-right: 13px;
  display: flex;
  z-index: 1;
}

.task {
  display: flex;
  align-items: center;
  justify-content: center;
  width: 46px;
  height: 34px;
  border: 1px solid #a4bcc8;
  border-radius: 3px;
  background: linear-gradient(150deg, #9db4bf, #5e8599 45%, #3c6e86 55%, #4b7d94);
}

.task.flat {
  border-color: transparent;
  background: none;
}

.task.stacked {
  width: 38px;
  margin-right: 8px;
  box-shadow: 2px 0 #24566e, 3px 0 #a4bcc8, 5px 0 #24566e, 6px 0 #7d9fae;
}

.task.active {
  background: linear-gradient(150deg, #eaf0f2, #b4c4cc 45%, #8ea6b1 55%, #a8bcc5);
}

.letter {
  font: 700 13px "Liberation Sans", sans-serif;
  fill: #fff;
}

.letter.word {
  fill: #2456b0;
}

.tray {
  margin-left: auto;
  display: flex;
  align-items: center;
  gap: 14px;
  color: #fff;
  font-size: 14px;
}

.lang {
  margin-right: 12px;
  color: #f4f4f4;
}

.tray time {
  margin-left: 6px;
}

.peek {
  width: 14px;
  height: 34px;
  border: 1px solid #8db0c0;
  background: linear-gradient(150deg, #5d8ca0, #1f5a74);
}

/* Context menu */
.context-menu {
  position: absolute;
  left: 248px;
  top: 264px;
  z-index: 2;
  width: 359px;
  padding: 2px 2px 3px;
  border: 1px solid #999;
  box-shadow: 2px 2px 3px rgba(0, 0, 0, 0.5);
  list-style: none;
  font-size: 14px;
  background: linear-gradient(90deg, transparent 30px, #e0e0e0 30px, #e0e0e0 31px, #fff 31px, #fff 32px, transparent 32px) #f0f0f0;
}

.context-menu button {
  display: flex;
  justify-content: space-between;
  align-items: center;
  width: 100%;
  height: 24px;
  padding: 0 18px 0 34px;
}

.context-menu button:disabled {
  color: #7d7d7d;
}

.context-menu kbd {
  font: inherit;
}

.context-menu .sub::after {
  content: "";
  margin-right: -9px;
  border: 4px solid transparent;
  border-left: 4px solid #000;
  border-right: none;
}

.context-menu .line::before {
  content: "";
  display: block;
  margin: 0 0 3px 30px;
  border-top: 1px solid #dcdcdc;
  border-bottom: 1px solid #fff;
}

.context-menu .line {
  padding-top: 3px;
}
```
